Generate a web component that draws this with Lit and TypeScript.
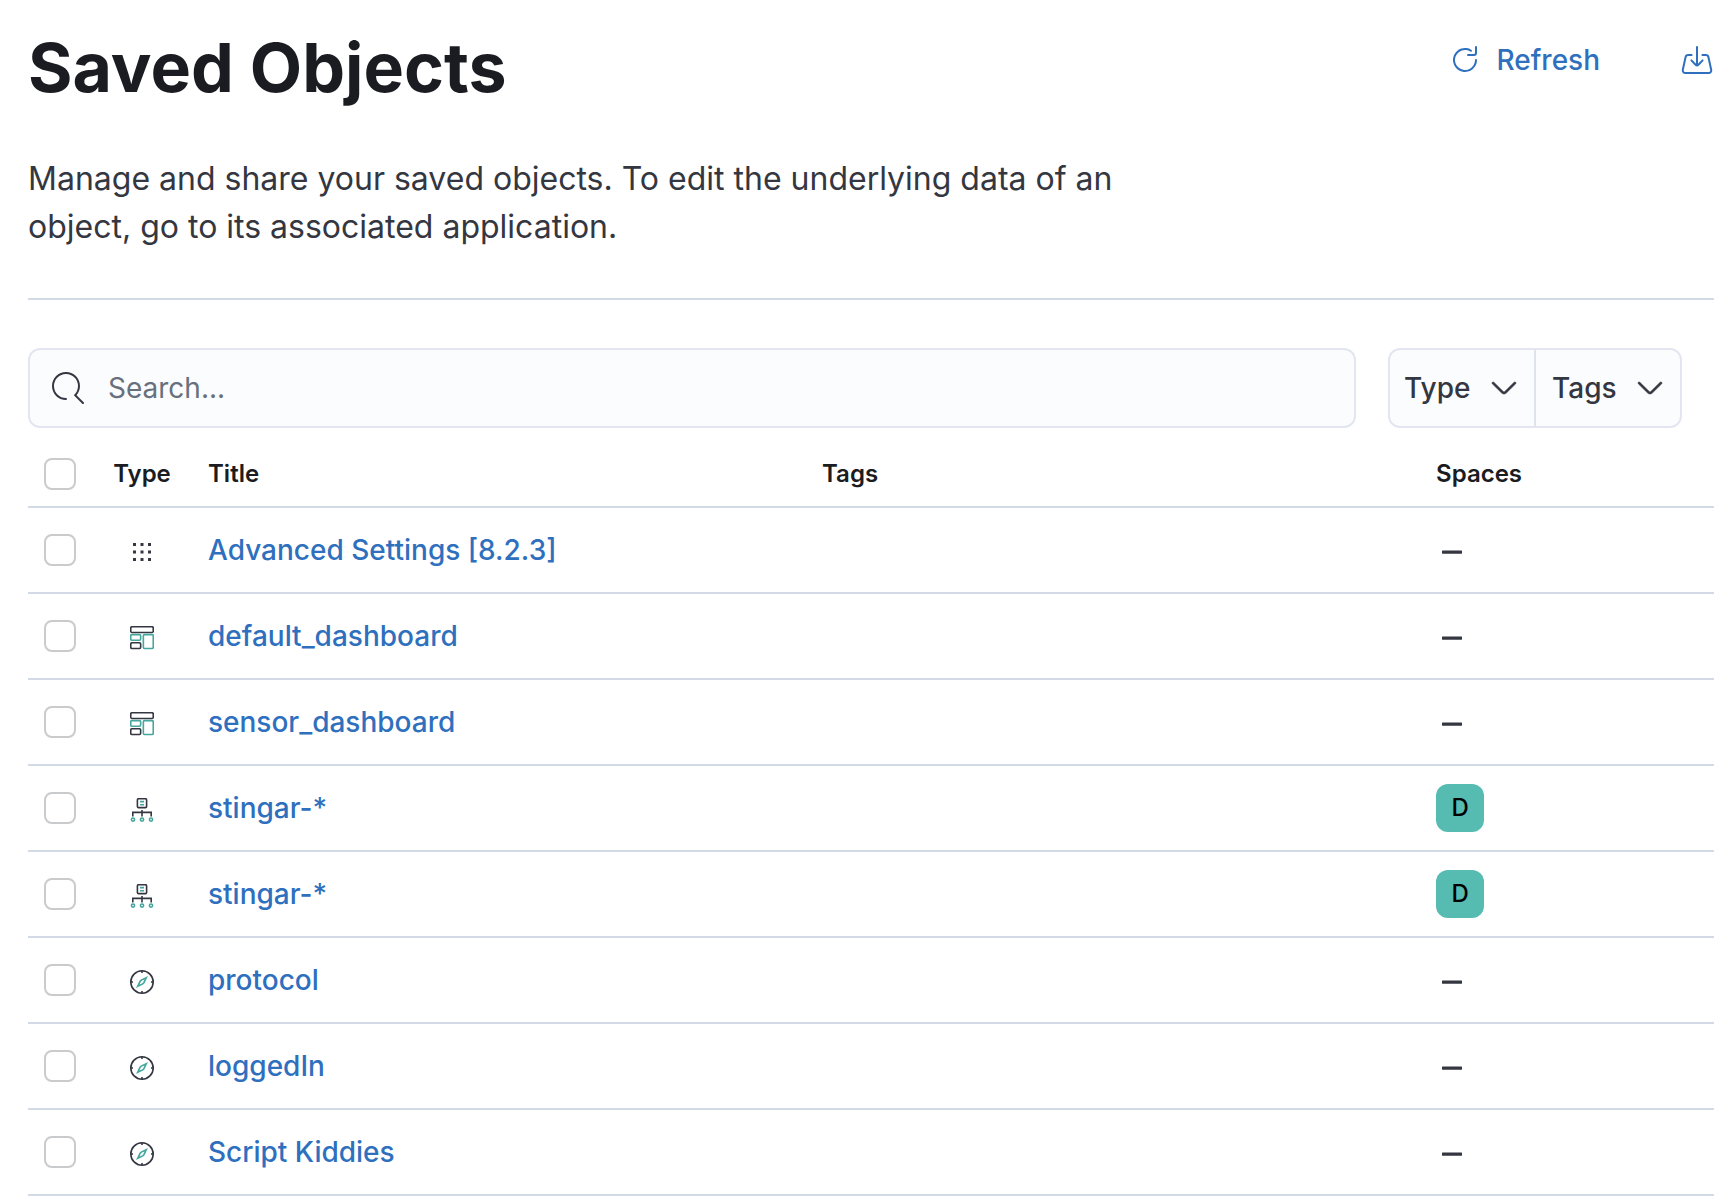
import { LitElement, html, css, svg } from "lit";
import { customElement, property, state } from "lit/decorators.js";

type Kind = "config" | "dashboard" | "pattern" | "search";

interface SavedObject {
  kind: Kind;
  title: string;
  space?: string;
}

const OBJECTS: SavedObject[] = [
  { kind: "config", title: "Advanced Settings [8.2.3]" },
  { kind: "dashboard", title: "default_dashboard" },
  { kind: "dashboard", title: "sensor_dashboard" },
  { kind: "pattern", title: "stingar-*", space: "D" },
  { kind: "pattern", title: "stingar-*", space: "D" },
  { kind: "search", title: "protocol" },
  { kind: "search", title: "loggedIn" },
  { kind: "search", title: "Script Kiddies" },
];

const DOTS = [2, 7, 12];

const TYPE_ICONS = {
  config: svg`<g class="solid" transform="scale(1.5)">
    ${DOTS.map((y) => DOTS.map((x) => svg`<rect x=${x} y=${y} width="2" height="2"></rect>`))}
  </g>`,
  dashboard: svg`
    <rect class="line" x="0.75" y="0.75" width="22.5" height="5.7" rx="1.2"></rect>
    <rect class="accent" x="0.75" y="8.6" width="9.9" height="5.7" rx="1.2"></rect>
    <rect class="line" x="0.75" y="16.8" width="9.9" height="5.7" rx="1.2"></rect>
    <rect class="accent" x="13.35" y="8.6" width="9.9" height="13.9" rx="1.2"></rect>`,
  pattern: svg`
    <rect class="line" x="7.4" y="0.75" width="9.2" height="8.9" rx="1.2"></rect>
    <path class="accent" d="M10 3.6h4M10 6.7h4"></path>
    <path class="line" d="M12 12v6.4M2.8 18.4v-4h18.4v4"></path>
    <circle class="accent" cx="3" cy="21.6" r="1.6"></circle>
    <circle class="accent" cx="12" cy="21.6" r="1.6"></circle>
    <circle class="accent" cx="21" cy="21.6" r="1.6"></circle>`,
  search: svg`
    <circle class="line" cx="12" cy="12" r="11.2"></circle>
    <path class="line" d="M12 .8v2.2M12 21v2.2M.8 12h2.2M21 12h2.2"></path>
    <path class="accent" d="M16.3 7.7l-2.4 5-1.2 1.2-5 2.4 2.4-5 1.2-1.2z"></path>`,
};

@customElement("type-icon")
class TypeIcon extends LitElement {
  @property() kind: Kind = "config";

  static styles = css`
    :host {
      display: inline-block;
    }
    .icon {
      display: block;
      width: 24px;
      height: 24px;
    }
    .solid {
      fill: #343741;
    }
    .line,
    .accent {
      fill: none;
      stroke: #343741;
      stroke-width: 1.6;
    }
    .accent {
      stroke: #45a69d;
    }
  `;

  render() {
    return html`<svg class="icon" viewBox="0 0 24 24" aria-hidden="true">${TYPE_ICONS[this.kind]}</svg>`;
  }
}

const chevron = html`<svg class="glyph heavy" viewBox="0 0 16 16" aria-hidden="true">
  <path d="M13.069 5.157L8.384 9.768a.546.546 0 01-.768 0L2.93 5.158a.552.552 0 00-.771 0 .53.53 0 000 .759l4.684 4.61c.641.631 1.672.63 2.312 0l4.684-4.61a.53.53 0 000-.76.552.552 0 00-.771 0z"></path>
</svg>`;

@customElement("app-root")
class AppRoot extends LitElement {
  @state() private selected = new Set<number>();

  static styles = css`
    :host {
      display: block;
      background: #fff;
      color: #343741;
      font-family: Inter, "Liberation Sans", sans-serif;
      font-size: 28px;
      line-height: 48px;
    }
    .page {
      padding: 27px 0 0 28px;
    }
    .header {
      display: flex;
      justify-content: space-between;
      align-items: flex-start;
    }
    .heading {
      margin: 0;
      color: #1a1c21;
      font-size: 68px;
      font-weight: 700;
      line-height: 80px;
    }
    .actions {
      display: flex;
      gap: 81px;
      padding: 9px 1px 0 0;
    }
    .action {
      display: flex;
      align-items: center;
      gap: 16px;
      padding: 0;
      border: 0;
      background: none;
      color: #2f70be;
      font: inherit;
      font-weight: 500;
      cursor: pointer;
    }
    .glyph {
      display: block;
      flex: none;
      width: 32px;
      height: 32px;
      fill: currentColor;
    }
    .outline {
      fill: none;
      stroke: currentColor;
      stroke-linecap: round;
      stroke-linejoin: round;
    }
    .heavy {
      stroke: currentColor;
      stroke-width: 0.3;
    }
    .intro {
      max-width: 1160px;
      margin: 48px 0 47px;
      font-size: 32px;
      line-height: 48px;
    }
    .rule {
      height: 2px;
      margin: 0 0 48px;
      border: 0;
      background: #d3dae6;
    }
    .toolbar {
      display: flex;
      gap: 32px;
      padding-right: 32px;
    }
    .field {
      display: flex;
      flex: 1;
      align-items: center;
      gap: 24px;
      box-sizing: border-box;
      height: 80px;
      padding: 0 22px;
      border: 2px solid #e3e6f1;
      border-radius: 12px;
      background: #fbfcfd;
    }
    .query {
      flex: 1;
      min-width: 0;
      padding: 0;
      border: 0;
      outline: 0;
      background: none;
      color: inherit;
      font: inherit;
    }
    .query::placeholder {
      color: #69707d;
      opacity: 1;
    }
    .filters {
      display: flex;
      box-sizing: border-box;
      height: 80px;
      border: 2px solid #e3e6f1;
      border-radius: 12px;
      background: #fbfcfd;
    }
    .filter {
      display: flex;
      align-items: center;
      justify-content: space-between;
      box-sizing: border-box;
      width: 144px;
      padding: 0 14px;
      border: 0;
      background: none;
      color: inherit;
      font: inherit;
      font-weight: 500;
      cursor: pointer;
    }
    .filter + .filter {
      width: 146px;
      padding-left: 16px;
      border-left: 2px solid #dfe3ee;
    }
    .objects {
      width: 100%;
      margin-top: 14px;
      border-spacing: 0;
      table-layout: fixed;
    }
    .col-check {
      width: 64px;
    }
    .col-type {
      width: 100px;
    }
    .col-wide {
      width: 36.42%;
    }
    .head,
    .cell {
      box-sizing: border-box;
      padding: 0 16px;
      border-bottom: 2px solid #d3dae6;
      text-align: left;
      vertical-align: middle;
    }
    .head {
      height: 66px;
      color: #1a1c21;
      font-size: 24px;
      font-weight: 600;
      line-height: 36px;
    }
    .cell {
      height: 86px;
    }
    .kind {
      text-align: center;
    }
    .check {
      display: block;
      appearance: none;
      box-sizing: border-box;
      width: 32px;
      height: 32px;
      margin: 0;
      border: 2px solid #c9cbcd;
      border-radius: 8px;
      background: #fff;
    }
    .check:checked {
      border-color: #2f70be;
      background: #2f70be;
    }
    .mark {
      display: flex;
      justify-content: center;
      padding-top: 4px;
    }
    .none {
      justify-content: flex-start;
    }
    .link {
      color: #2f70be;
      font-weight: 500;
      text-decoration: none;
    }
    .avatar {
      display: flex;
      align-items: center;
      justify-content: center;
      width: 48px;
      height: 48px;
      border-radius: 12px;
      background: #56bbb1;
      color: #000;
      font-size: 24px;
      font-weight: 500;
    }
  `;

  private toggle(index: number) {
    const next = new Set(this.selected);
    if (!next.delete(index)) next.add(index);
    this.selected = next;
  }

  private toggleAll() {
    this.selected = this.selected.size === OBJECTS.length ? new Set() : new Set(OBJECTS.keys());
  }

  private row(item: SavedObject, index: number) {
    return html`<tr>
      <td class="cell">
        <input
          class="check"
          type="checkbox"
          aria-label=${`Select ${item.title}`}
          .checked=${this.selected.has(index)}
          @change=${() => this.toggle(index)}
        />
      </td>
      <td class="cell"><div class="mark"><type-icon .kind=${item.kind}></type-icon></div></td>
      <td class="cell"><a class="link" href="#">${item.title}</a></td>
      <td class="cell"></td>
      <td class="cell">
        ${item.space
          ? html`<div class="avatar">${item.space}</div>`
          : html`<div class="mark none">
              <svg class="glyph" viewBox="0 0 16 16" aria-hidden="true">
                <rect x="3" y="7.2" width="10" height="1.7" rx="0.3"></rect>
              </svg>
            </div>`}
      </td>
    </tr>`;
  }

  render() {
    return html`<main class="page">
      <header class="header">
        <h1 class="heading">Saved Objects</h1>
        <div class="actions">
          <button class="action" type="button">
            <svg class="glyph" viewBox="0 0 16 16" aria-hidden="true">
              <path d="M11.228 2.942a.5.5 0 11-.538.842A5 5 0 1013 8a.5.5 0 111 0 6 6 0 11-2.772-5.058zM14 1.5v3A1.5 1.5 0 0112.5 6h-3a.5.5 0 010-1h3a.5.5 0 00.5-.5v-3a.5.5 0 111 0z"></path>
            </svg>
            Refresh
          </button>
          <button class="action" type="button" aria-label="Import">
            <svg class="glyph outline" viewBox="0 0 16 16" aria-hidden="true">
              <path d="M8 1.5v9.2M5.2 8.2l2.1 2.2a1 1 0 001.4 0l2.1-2.2M5.3 5.5H3.6a1.3 1.3 0 00-1.3 1L.9 12.9a1.3 1.3 0 001.3 1.6h11.6a1.3 1.3 0 001.3-1.6l-1.4-6.4a1.3 1.3 0 00-1.3-1h-1.7"></path>
            </svg>
          </button>
        </div>
      </header>
      <p class="intro">
        Manage and share your saved objects. To edit the underlying data of an object, go to its associated application.
      </p>
      <hr class="rule" />
      <div class="toolbar">
        <label class="field">
          <svg class="glyph" viewBox="0 0 16 16" aria-hidden="true">
            <path d="M11.271 11.978l3.872 3.873a.502.502 0 00.708 0 .502.502 0 000-.708l-3.565-3.564c2.38-2.747 2.267-6.923-.342-9.532-2.73-2.73-7.17-2.73-9.898 0-2.728 2.729-2.728 7.17 0 9.9a6.955 6.955 0 004.949 2.05.5.5 0 000-1 5.96 5.96 0 01-4.242-1.757 6.01 6.01 0 010-8.486 6.004 6.004 0 018.484 0 6.01 6.01 0 010 8.486.5.5 0 00.034.738z"></path>
          </svg>
          <input class="query" type="text" placeholder="Search..." aria-label="Search saved objects" />
        </label>
        <div class="filters">
          <button class="filter" type="button">Type ${chevron}</button>
          <button class="filter" type="button">Tags ${chevron}</button>
        </div>
      </div>
      <table class="objects">
        <colgroup>
          <col class="col-check" />
          <col class="col-type" />
          <col class="col-wide" />
          <col class="col-wide" />
          <col />
        </colgroup>
        <thead>
          <tr>
            <th class="head">
              <input
                class="check"
                type="checkbox"
                aria-label="Select all rows"
                .checked=${this.selected.size === OBJECTS.length}
                @change=${this.toggleAll}
              />
            </th>
            <th class="head kind">Type</th>
            <th class="head">Title</th>
            <th class="head">Tags</th>
            <th class="head">Spaces</th>
          </tr>
        </thead>
        <tbody>
          ${OBJECTS.map((item, index) => this.row(item, index))}
        </tbody>
      </table>
    </main>`;
  }
}
